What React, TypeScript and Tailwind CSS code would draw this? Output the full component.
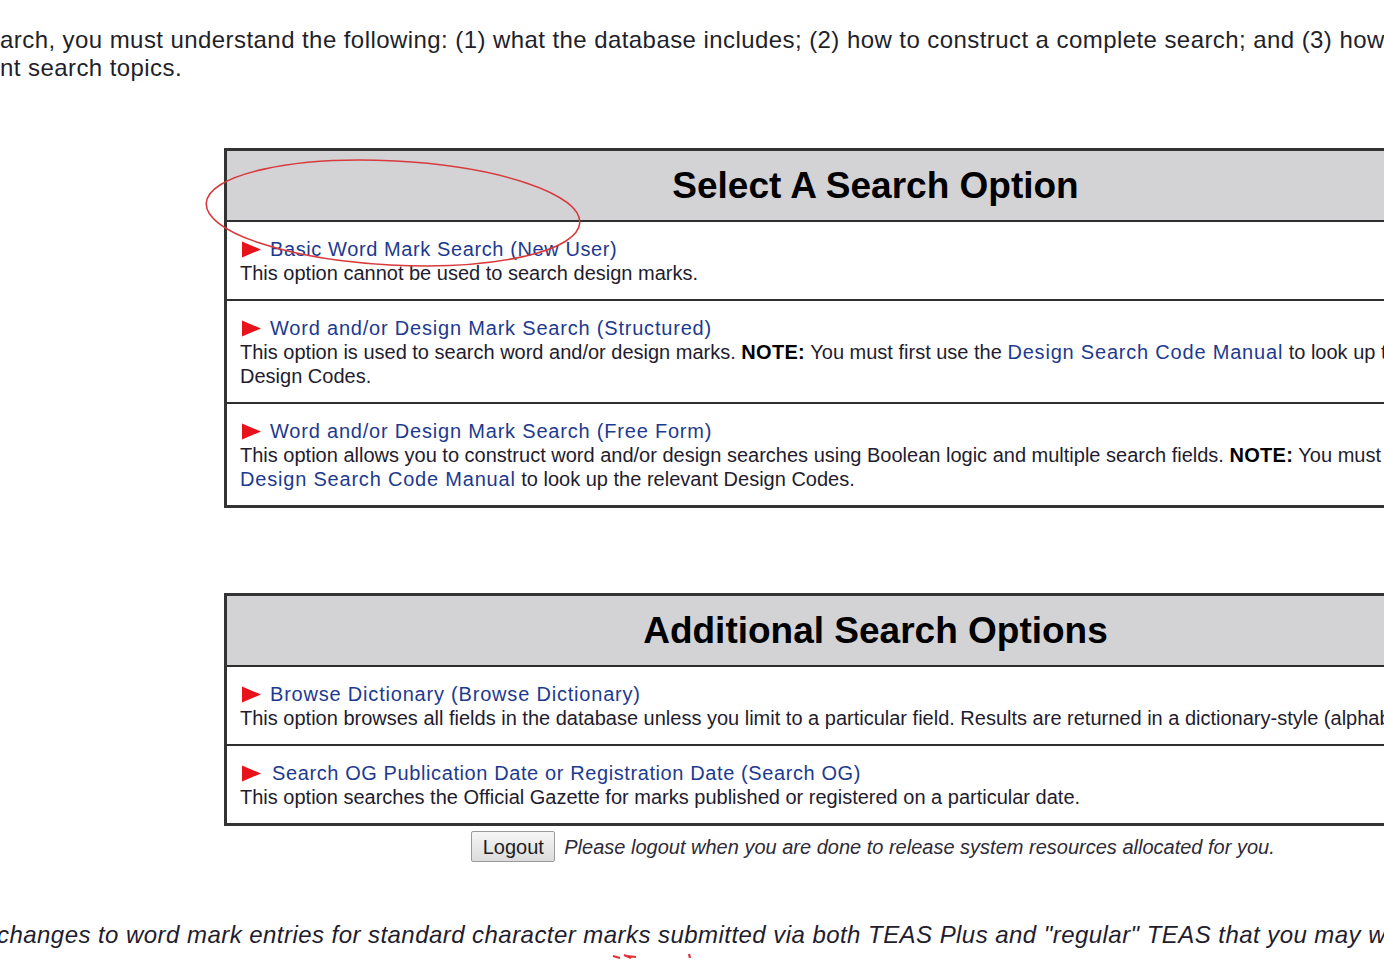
import React from "react";

const F = { fontFamily: '"Liberation Sans", Arial, sans-serif' };

function Tri() {
  return (
    <svg width="21" height="17" viewBox="0 0 21 17" className="shrink-0">
      <polygon points="1,0.5 20,8.5 1,16.5" fill="#e8121b" />
    </svg>
  );
}

function LinkLine({ children, ml = "ml-0", tr = "tracking-[0.8px]" }: { children: React.ReactNode; ml?: string; tr?: string }) {
  return (
    <div className="flex items-center h-[24px] gap-[8px] pl-[1px]">
      <Tri />
      <span className={`text-[20px] leading-[24px] text-[#1d3a8f] whitespace-nowrap ${tr} ${ml}`}>{children}</span>
    </div>
  );
}

function Manual() {
  return <span className="text-[#1d3a8f] tracking-[0.8px]">Design Search Code Manual</span>;
}

function Note() {
  return <span className="font-bold text-black tracking-[0.3px]">NOTE:</span>;
}

function Row({ children, last }: { children: React.ReactNode; last?: boolean }) {
  return (
    <div className={`pl-[13px] pt-[15px] pb-[14px] ${last ? "" : "border-b-2 border-[#2e2e2e]"}`}>
      {children}
    </div>
  );
}

function Desc({ children }: { children: React.ReactNode }) {
  return <div className="text-[20px] leading-[24px] text-[#221c2e] whitespace-nowrap">{children}</div>;
}

function Header({ title }: { title: string }) {
  return (
    <div className="h-[71px] bg-[#d3d3d6] border-b-2 border-[#2e2e2e] flex items-center justify-center">
      <span className="text-[37px] font-bold text-black leading-none">{title}</span>
    </div>
  );
}

export default function App() {
  return (
    <div className="relative w-[1384px] h-[962px] overflow-hidden bg-white" style={F}>
      <div className="pt-[26px] text-[24px] leading-[28px] tracking-[0.43px] text-[#221f2b] whitespace-nowrap">
        <div>arch, you must understand the following: (1) what the database includes; (2) how to construct a complete search; and (3) how to</div>
        <div>nt search topics.</div>
      </div>

      <div className="ml-[224px] w-[1300px] mt-[66px] border-[3px] border-[#333] border-r-0">
        <Header title="Select A Search Option" />
        <Row>
          <LinkLine tr="tracking-[0.6px]">Basic Word Mark Search (New User)</LinkLine>
          <Desc>This option cannot be used to search design marks.</Desc>
        </Row>
        <Row>
          <LinkLine>Word and/or Design Mark Search (Structured)</LinkLine>
          <Desc>
            This option is used to search word and/or design marks. <Note /> You must first use the <Manual /> to look up the relevant
          </Desc>
          <Desc>Design Codes.</Desc>
        </Row>
        <Row last>
          <LinkLine>Word and/or Design Mark Search (Free Form)</LinkLine>
          <Desc>
            This option allows you to construct word and/or design searches using Boolean logic and multiple search fields. <Note /> You must first use the
          </Desc>
          <Desc>
            <Manual /> to look up the relevant Design Codes.
          </Desc>
        </Row>
      </div>

      <div className="ml-[224px] w-[1300px] mt-[85px] border-[3px] border-[#333] border-r-0">
        <Header title="Additional Search Options" />
        <Row>
          <LinkLine>Browse Dictionary (Browse Dictionary)</LinkLine>
          <Desc>
            This option browses all fields in the database unless you limit to a particular field. Results are returned in a dictionary-style (alphabetical) list.
          </Desc>
        </Row>
        <Row last>
          <LinkLine ml="ml-[2px]" tr="tracking-[0.6px]">Search OG Publication Date or Registration Date (Search OG)</LinkLine>
          <Desc>This option searches the Official Gazette for marks published or registered on a particular date.</Desc>
        </Row>
      </div>

      <div className="ml-[224px] w-[1298px] mt-[5px] flex items-center justify-center gap-[9px]">
        <button className="h-[31px] w-[84px] border border-[#9a9a9a] rounded-[2px] bg-gradient-to-b from-[#f6f6f6] to-[#dcdcdc] text-[20px] text-[#1e1e1e] leading-none">
          Logout
        </button>
        <span className="italic text-[20px] text-[#2e2a36] whitespace-nowrap">
          Please logout when you are done to release system resources allocated for you.
        </span>
      </div>

      <div className="mt-[59px] -ml-[3px] italic text-[24px] leading-[28px] tracking-[0.45px] text-[#221c2e] whitespace-nowrap">
        changes to word mark entries for standard character marks submitted via both TEAS Plus and "regular" TEAS that you may want to
      </div>

      <svg className="absolute left-0 top-0 pointer-events-none" width="1384" height="962">
        <ellipse cx="393" cy="213" rx="187" ry="52" transform="rotate(3 393 213)" fill="none" stroke="#d83a3c" strokeWidth="1.6" />
        <path d="M613 956 L620 958 M624 955 L631 958 M627 956 L636 957 M689 954 L690 958" stroke="#e0303a" strokeWidth="2.2" fill="none" />
      </svg>
    </div>
  );
}
